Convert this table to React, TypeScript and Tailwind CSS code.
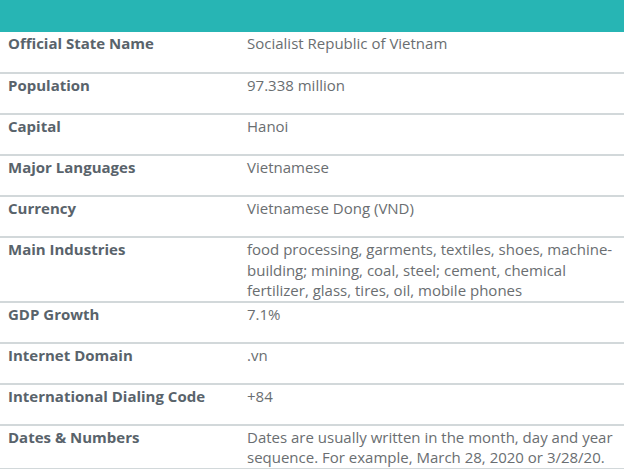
const rows: [string, string][] = [
  ['Official State Name', 'Socialist Republic of Vietnam'],
  ['Population', '97.338 million'],
  ['Capital', 'Hanoi'],
  ['Major Languages', 'Vietnamese'],
  ['Currency', 'Vietnamese Dong (VND)'],
  ['Main Industries', 'food processing, garments, textiles, shoes, machine-building; mining, coal, steel; cement, chemical fertilizer, glass, tires, oil, mobile phones'],
  ['GDP Growth', '7.1%'],
  ['Internet Domain', '.vn'],
  ['International Dialing Code', '+84'],
  ['Dates & Numbers', 'Dates are usually written in the month, day and year sequence. For example, March 28, 2020 or 3/28/20.'],
];

export default function App() {
  return (
    <div className="w-[624px] bg-white font-['Open_Sans',sans-serif] text-[15px] leading-[20.5px]">
      <div className="h-[32px] bg-[#27b5b4]" />
      <table className="w-full border-collapse">
        <tbody>
          {rows.map(([label, value]) => (
            <tr key={label} className="border-b-2 border-[#d2d8da] align-top">
              <td className="w-[239px] h-[41px] px-2 pt-[1px] font-bold text-[#59636b]">{label}</td>
              <td className="px-2 pt-[1px] text-[#6a6e71]">{value}</td>
            </tr>
          ))}
        </tbody>
      </table>
    </div>
  );
}
